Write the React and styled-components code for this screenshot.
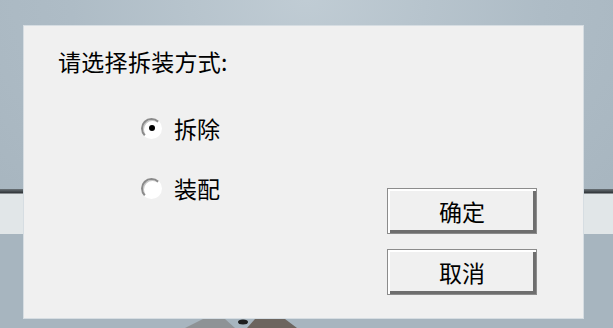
import styled, { createGlobalStyle } from 'styled-components';

const GlobalStyle = createGlobalStyle`
  html, body {
    margin: 0;
    padding: 0;
    overflow: hidden;
  }
  body {
    font-family: "Noto Sans CJK SC", "Noto Sans", sans-serif;
  }
`;

// 背景：蓝灰色桌面 + 横向的暗线和浅色条
const Backdrop = styled.div`
  position: relative;
  width: 613px;
  height: 328px;
  box-sizing: border-box;
  padding: 25px 29px 9px 23px;
  background:
    linear-gradient(
      to bottom,
      transparent 189px,
      #6a7277 189px,
      #2e3337 193px,
      #e1e6e8 194px,
      #e1e6e8 234px,
      transparent 234px
    ),
    radial-gradient(ellipse 70% 90% at 50% 0%, #c0ccd4 0%, #aebcc6 55%, #a7b5bf 100%);
`;

const Blob = styled.svg`
  position: absolute;
  left: 185px;
  bottom: 0;
  z-index: 0;
`;

const Panel = styled.div`
  position: relative;
  z-index: 1;
  height: 100%;
  box-sizing: border-box;
  padding: 22px 46px 0 34px;
  background: #f0f0f0;
  border: 1px solid #d6dde2;
  color: #000;
`;

const Title = styled.div`
  font-size: 23px;
  line-height: 27px;
  letter-spacing: 0.3px;
`;

const Body = styled.div`
  display: grid;
  grid-template-columns: 1fr 150px;
  margin-top: 41px;
`;

const Options = styled.div`
  display: flex;
  flex-direction: column;
  gap: 36px;
  padding-left: 83px;
`;

const Option = styled.label`
  display: flex;
  align-items: center;
  gap: 12px;
  height: 24px;
  font-size: 23px;
  line-height: 24px;
`;

const Radio = styled.span`
  position: relative;
  width: 17px;
  height: 17px;
  border-radius: 50%;
  border: 2px solid;
  border-color: #8a8a8a #ffffff #ffffff #8a8a8a;
  background: #fff;
  box-shadow: inset 1px 1px 0 #c8c8c8;

  &::after {
    content: '';
    position: absolute;
    left: 50%;
    top: 50%;
    width: 6px;
    height: 6px;
    margin: -3px 0 0 -3px;
    border-radius: 50%;
    background: #000;
    display: ${(p) => (p.$checked ? 'block' : 'none')};
  }
`;

const Actions = styled.div`
  display: flex;
  flex-direction: column;
  gap: 15px;
  padding-top: 72px;
`;

const Button = styled.button`
  width: 150px;
  height: 46px;
  padding: 0;
  background: #f0f0f0;
  border: 1px solid #8c8c8c;
  box-shadow:
    inset 2px 2px 0 #ffffff,
    inset -3px -3px 0 #6e6e6e;
  font-family: "Noto Sans CJK SC", "Noto Sans", sans-serif;
  font-size: 23px;
  line-height: 1;
  color: #000;
`;

function App() {
  return (
    <>
      <GlobalStyle />
      <Backdrop>
        <Blob width="115" height="10" viewBox="0 0 115 10">
          <path d="M0 10 L18 1 L40 1 L50 10 Z" fill="#8e9396" />
          <ellipse cx="58" cy="4" rx="5" ry="2.5" fill="#1e1e1e" />
          <path d="M62 10 L70 1 L100 1 L112 10 Z" fill="#6c655f" />
        </Blob>
        <Panel>
          <Title>请选择拆装方式:</Title>
          <Body>
            <Options>
              <Option>
                <Radio $checked />
                拆除
              </Option>
              <Option>
                <Radio />
                装配
              </Option>
            </Options>
            <Actions>
              <Button>确定</Button>
              <Button>取消</Button>
            </Actions>
          </Body>
        </Panel>
      </Backdrop>
    </>
  );
}

export default App;
